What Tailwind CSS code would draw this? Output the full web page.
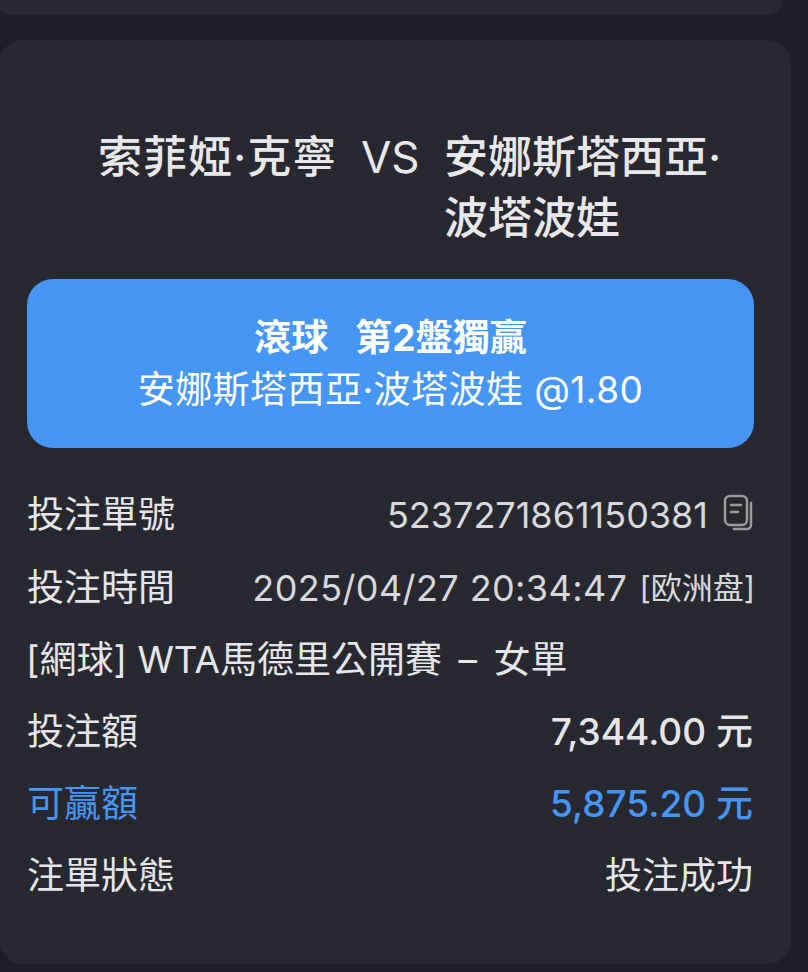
<!DOCTYPE html>
<html lang="zh-Hant">
<head>
    <meta charset="UTF-8" />
    <meta name="viewport" content="width=device-width, initial-scale=1.0" />
    <title>注單詳情</title>
    <script src="https://cdn.jsdelivr.net/npm/@tailwindcss/browser@4"></script>
</head>
<body class="w-[808px] h-[972px] overflow-hidden bg-[#1e1f26] font-['Inter','Noto_Sans_CJK_TC',sans-serif] text-[#e6e6e8]">
    <!-- previous card, only its bottom edge shows -->
    <div class="h-[15px] w-[786px] -ml-1 rounded-b-[20px] bg-[#282930]"></div>

    <div class="mt-[25px] w-[792px] h-[924px] -ml-px rounded-[24px] bg-[#282930] pl-[28px] pr-[38px]">
        <!-- match title -->
        <div class="flex pt-[87px] text-[44px] leading-[61px] font-medium text-[#e8e8ea]">
            <div class="ml-[71px] w-[263px] shrink-0 tracking-[1px]">索菲婭·克寧</div>
            <div class="w-[83px] shrink-0 font-normal">VS</div>
            <div class="w-[285px] shrink-0">安娜斯塔西亞·波塔波娃</div>
        </div>

        <!-- selection -->
        <div class="mt-[30px] h-[169px] w-[727px] rounded-[26px] bg-[#4596f5] pt-[32px] text-center text-white">
            <div class="text-[37px] leading-[54px] font-bold"><span class="mr-[27px]">滾球</span>第2盤獨贏</div>
            <div class="text-[37px] leading-[50px] tracking-[0.45px]">安娜斯塔西亞·波塔波娃 @1.80</div>
        </div>

        <!-- bet details -->
        <div class="mt-[31px] text-[37px] leading-[72px]">
            <div class="flex h-[72px] items-center justify-between">
                <span>投注單號</span>
                <span class="flex items-center text-[#d8d8db]">
                    <span class="text-[36px]">5237271861150381</span>
                    <svg class="ml-[15px] -mt-[6px]" width="30" height="37" viewBox="0 0 30 37" fill="none" stroke="#9a9ba1" stroke-width="2.5" stroke-linecap="round" stroke-linejoin="round">
                        <rect x="2" y="2" width="22" height="29" rx="5" />
                        <path d="M8 11h10M8 18h7" />
                        <path d="M28 9v22a4 4 0 0 1-4 4H11" />
                    </svg>
                </span>
            </div>
            <div class="flex h-[73px] items-center justify-between">
                <span>投注時間</span>
                <span class="flex items-center text-[#d8d8db]">
                    <span class="text-[36px] tracking-[0.4px]">2025/04/27 20:34:47</span>
                    <span class="ml-[12px] -mr-[2px] text-[31px]">[欧洲盘]</span>
                </span>
            </div>
            <div class="h-[72px] -ml-px">[網球] WTA馬德里公開賽<span class="[word-spacing:6px]"> – 女單</span></div>
            <div class="flex h-[72px] items-center justify-between">
                <span>投注額</span>
                <span class="font-medium">7,344.00 元</span>
            </div>
            <div class="flex h-[72px] items-center justify-between text-[#4596f5]">
                <span>可贏額</span>
                <span class="font-medium">5,875.20 元</span>
            </div>
            <div class="flex h-[72px] items-center justify-between">
                <span>注單狀態</span>
                <span>投注成功</span>
            </div>
        </div>
    </div>
</body>
</html>
